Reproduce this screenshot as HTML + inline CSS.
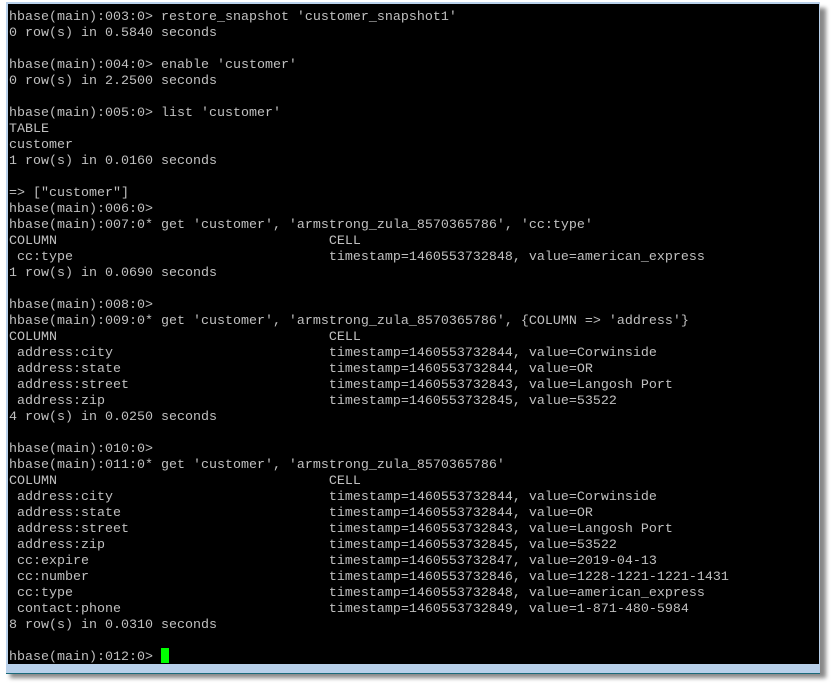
<!DOCTYPE html><html><head><style>
body{margin:0;width:833px;height:683px;background:#fff;position:relative;overflow:hidden}
.sh{position:absolute;left:10px;top:8px;width:816px;height:670px;background:#888;filter:blur(2px)}
.fr{position:absolute;left:6px;top:2px;width:814px;height:671px;background:#b8d0ea;border-bottom:1px solid #1a6a7a}
.t{position:absolute;left:8px;top:4px;width:811px;height:660px;background:#000}
pre{position:absolute;left:9px;top:10px;margin:0;font:13.33px/16px "Liberation Mono",monospace;color:#c0c0c0;white-space:pre}
.c{position:absolute;left:161px;top:648px;width:8px;height:15px;background:#00ff00}
</style></head><body>
<div class="sh"></div><div class="fr"></div><div class="t"></div>
<pre>hbase(main):003:0> restore_snapshot 'customer_snapshot1'
0 row(s) in 0.5840 seconds

hbase(main):004:0> enable 'customer'
0 row(s) in 2.2500 seconds

hbase(main):005:0> list 'customer'
TABLE
customer
1 row(s) in 0.0160 seconds

=> ["customer"]
hbase(main):006:0>
hbase(main):007:0* get 'customer', 'armstrong_zula_8570365786', 'cc:type'
COLUMN                                  CELL
 cc:type                                timestamp=1460553732848, value=american_express
1 row(s) in 0.0690 seconds

hbase(main):008:0>
hbase(main):009:0* get 'customer', 'armstrong_zula_8570365786', {COLUMN => 'address'}
COLUMN                                  CELL
 address:city                           timestamp=1460553732844, value=Corwinside
 address:state                          timestamp=1460553732844, value=OR
 address:street                         timestamp=1460553732843, value=Langosh Port
 address:zip                            timestamp=1460553732845, value=53522
4 row(s) in 0.0250 seconds

hbase(main):010:0>
hbase(main):011:0* get 'customer', 'armstrong_zula_8570365786'
COLUMN                                  CELL
 address:city                           timestamp=1460553732844, value=Corwinside
 address:state                          timestamp=1460553732844, value=OR
 address:street                         timestamp=1460553732843, value=Langosh Port
 address:zip                            timestamp=1460553732845, value=53522
 cc:expire                              timestamp=1460553732847, value=2019-04-13
 cc:number                              timestamp=1460553732846, value=1228-1221-1221-1431
 cc:type                                timestamp=1460553732848, value=american_express
 contact:phone                          timestamp=1460553732849, value=1-871-480-5984
8 row(s) in 0.0310 seconds

hbase(main):012:0> </pre>
<div class="c"></div>
</body></html>
